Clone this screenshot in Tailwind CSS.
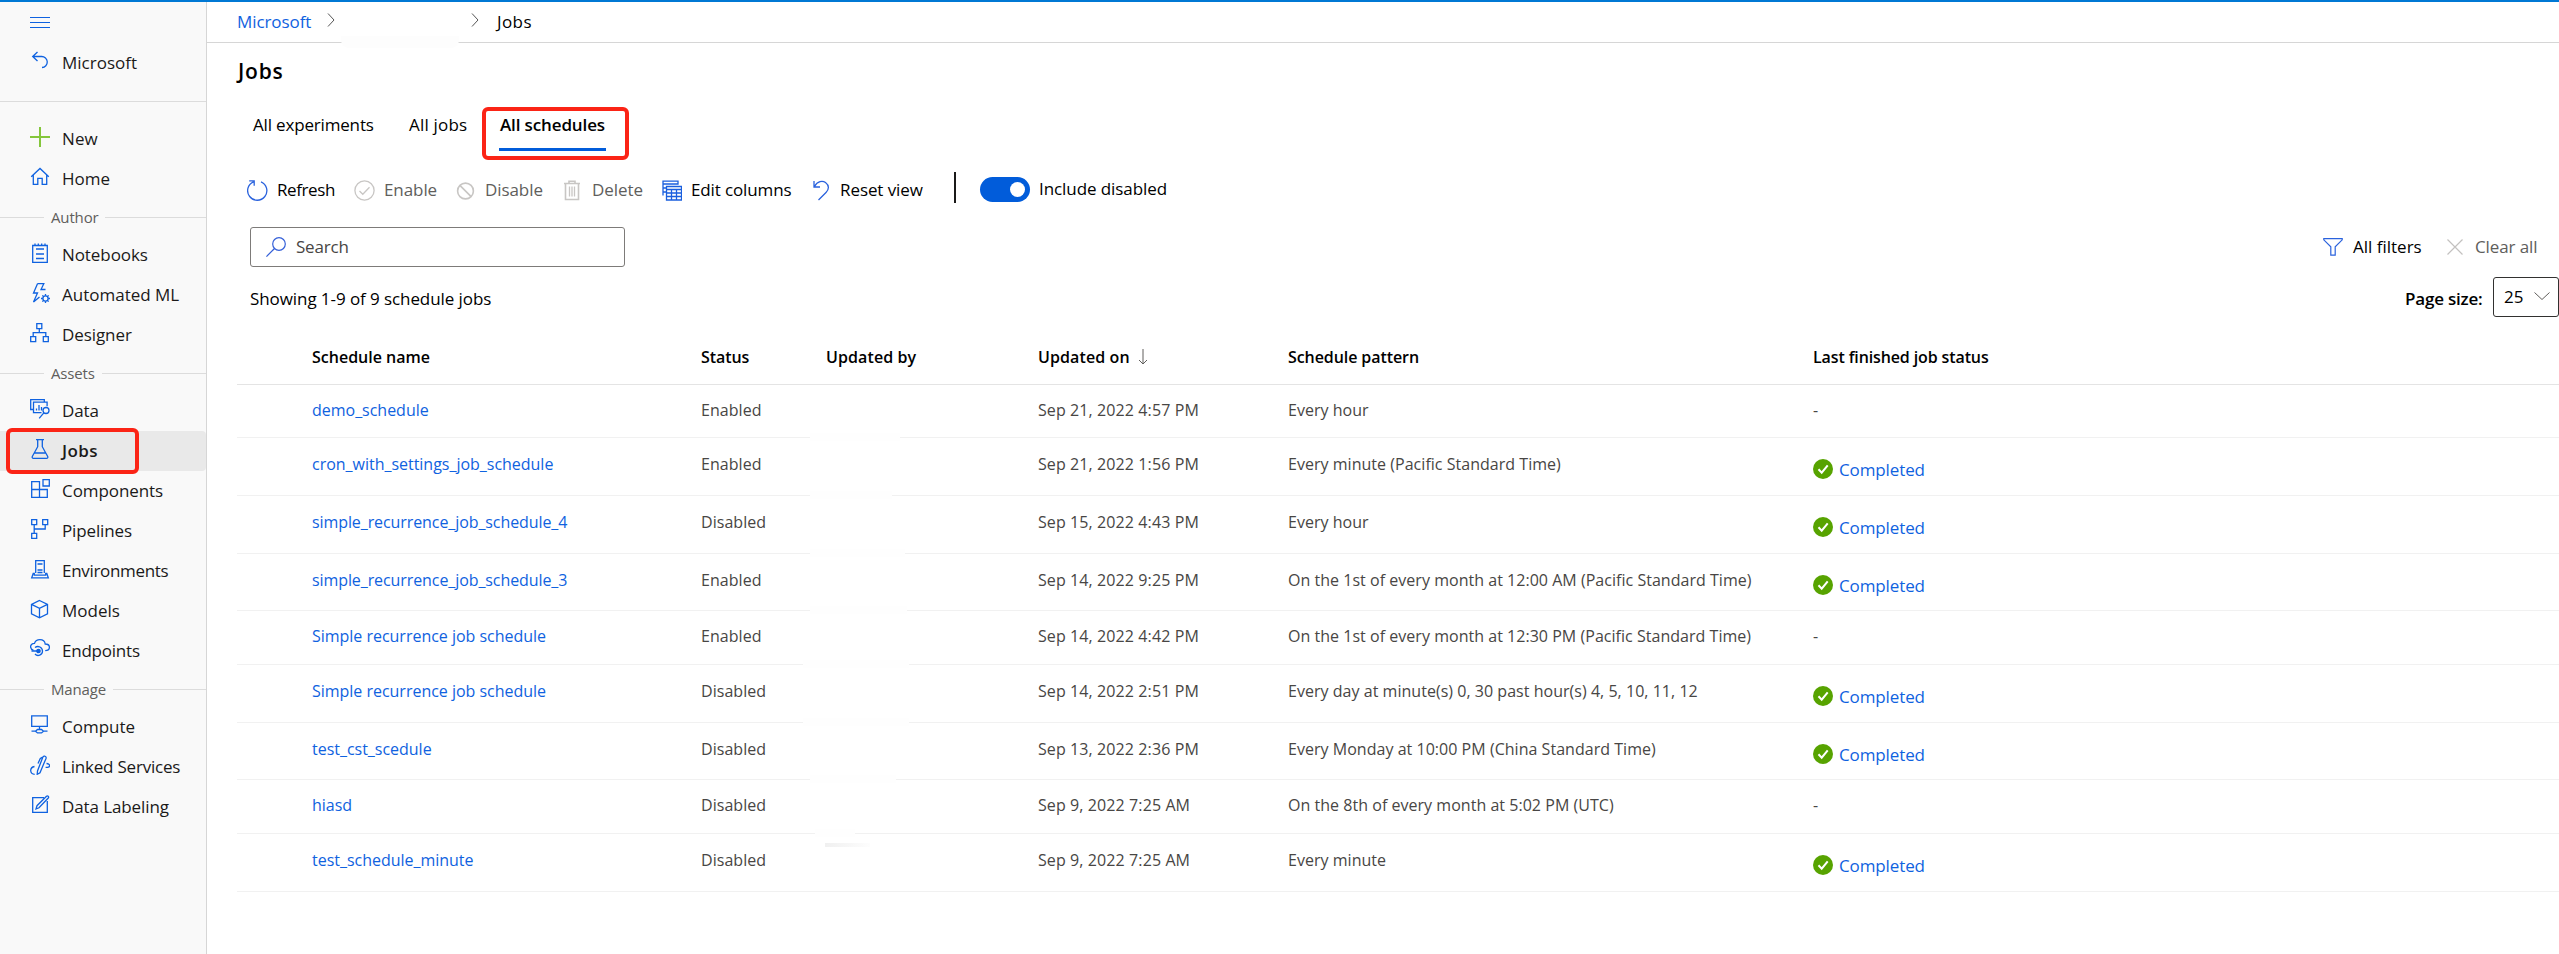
<!DOCTYPE html>
<html lang="en">
<head>
<meta charset="utf-8">
<title>Jobs</title>
<script src="https://cdn.jsdelivr.net/npm/@tailwindcss/browser@4"></script>
</head>
<body class="h-[954px] w-[2559px] overflow-hidden border-t-2 border-[#0078d4] bg-white font-['Open_Sans','Noto_Sans',sans-serif] text-[17px] leading-5 tracking-[-0.08px] text-black">
<div class="flex h-full whitespace-nowrap">

  <nav class="h-full w-[207px] shrink-0 border-r border-[#d6d6d6] bg-[#f9f9f9] text-[#1b1a19]">
    <div class="flex h-[41px] items-center pl-[30px]">
      <svg class="size-5" viewBox="0 0 20 20" fill="none" stroke="#0f62e0"><path d="M0 4.500h20M0 9.500h20M0 14.500h20"/></svg>
    </div>
    <div id="nav"></div>
  </nav>

  <main class="flex h-full min-w-0 flex-1 flex-col">
    <div class="relative flex h-[41px] shrink-0 items-center border-b border-[#d6d6d6] pl-[30px]">
      <span class="w-[90px] text-[#0f62e0]">Microsoft</span>
      <svg class="mt-[-4px] h-3.5 w-2" viewBox="0 0 8 14" fill="none" stroke="#555"><path d="M1 .5 7 7 1 13.500"/></svg>
      <svg class="mt-[-4px] ml-[136px] h-3.5 w-2" viewBox="0 0 8 14" fill="none" stroke="#555"><path d="M1 .5 7 7 1 13.500"/></svg>
      <span class="ml-[18px] tracking-[0.4px]">Jobs</span>
      <div class="absolute top-[34px] left-[134px] h-3 w-[118px] rounded-b-lg bg-[#fdfdfd]"></div>
    </div>

    <h1 class="mt-[14px] ml-[31px] h-7 text-[21px] leading-7 font-semibold tracking-[0.8px]">Jobs</h1>

    <div class="mt-[30px] ml-[46px] flex h-9 leading-[19px]">
      <span class="w-[156px] tracking-[-0.17px]">All experiments</span>
      <span class="w-[90px] tracking-[0.2px]">All jobs</span>
      <div class="relative w-[107px] border-b-3 border-[#015cda] pl-px">
        <span class="font-semibold tracking-[-0.13px]">All schedules</span>
        <div class="absolute -top-[8px] -left-[17px] h-[53px] w-[147px] rounded-md border-4 border-[#fb2416]"></div>
      </div>
    </div>

    <div class="mt-[18px] ml-10 flex h-[42px] items-center" id="toolbar"></div>

    <div class="mt-[16px] flex h-10 items-center">
      <div class="ml-[43px] flex h-10 w-[375px] items-center rounded-[3px] border border-[#7d7b79] pl-[15px]">
        <svg class="size-5" viewBox="0 0 20 20" fill="none" stroke="#3560d8" stroke-width="1.2"><circle cx="13" cy="7" r="6.300"/><path d="M8.500 11.500.4 19.600"/></svg>
        <span class="ml-2.5 tracking-[-0.2px] text-[#484644]">Search</span>
      </div>
      <div class="flex-1"></div>
      <svg class="size-5" viewBox="0 0 20 20" fill="none" stroke="#2a62dd" stroke-width="1.2"><path d="M.8 1.600h18.400v1.200l-7 7v8.400H7.800V9.800l-7-7z"/></svg>
      <span class="ml-2.5 w-[94px] tracking-normal">All filters</span>
      <svg class="size-4" viewBox="0 0 16 16" fill="none" stroke="#c3c1bf" stroke-width="1.200"><path d="m.5.5 15 15m0-15-15 15"/></svg>
      <span class="ml-3 w-[84px] tracking-[-0.1px] text-[#605e5c]">Clear all</span>
    </div>

    <div class="mt-2.5 flex h-10 items-center">
      <span class="mt-1 ml-[43px]">Showing 1-9 of 9 schedule jobs</span>
      <div class="flex-1"></div>
      <span class="mt-1 w-[88px] font-semibold tracking-[-0.2px]">Page size:</span>
      <div class="flex h-10 w-[66px] items-center rounded-[3px] border border-[#323130] pl-2.5">
        <span class="w-[30px]">25</span>
        <svg class="mt-[-2px] h-2 w-4" viewBox="0 0 16 8" fill="none" stroke="#605e5c"><path d="m.5.5 7.500 7 7.500-7"/></svg>
      </div>
    </div>

    <div class="ml-[30px]" id="grid"></div>
  </main>
</div>

<script>
const B = '<svg class="size-5 shrink-0" viewBox="0 0 20 20" fill="none" stroke="#0f62e0" stroke-width="1.300">';
const icons = {
  back: B + '<path d="M7.500 1 2.700 5.500 7.500 10M3 5.500h8.500a5.500 5.500 0 0 1 .5 11"/></svg>',
  plus: '<svg class="size-5 shrink-0" viewBox="0 0 20 20" fill="none" stroke="#84c63c" stroke-width="2"><path d="M10 0v20M0 10h20"/></svg>',
  home: B + '<path d="M1.200 9.800 10 1.500l8.800 8.300M3.300 8v9.400h4.500v-6h4.400v6h4.500V8"/></svg>',
  notebook: B + '<path d="M2.700 2.500h14.600v16.800H2.700zM5 .5v2M8.300.5v2M11.700.5v2M15 .5v2M6 6h8M6 11h8M6 15.500h8"/></svg>',
  automl: B + '<path d="M7.500.7h6.300L11 6.500h4.500M7.500.7 3.500 10h4l-4 9L9.500 14"/><circle cx="15.500" cy="15.500" r="2.600"/><path d="M15.500 11v1.800M15.500 18.200V20M11 15.500h1.800M18.200 15.500H20M12.400 12.400l1.200 1.200M17.400 17.400l1.200 1.200M18.600 12.400l-1.200 1.200M13.600 17.400l-1.200 1.200"/></svg>',
  designer: B + '<path d="M6.800.7h5v5h-5zM.7 13.700h5v5h-5zM13.300 13.700h5v5h-5zM9.300 5.700v4M3.200 13.700v-4h12.600v4"/></svg>',
  data: B + '<path d="M3.500 10.500H.7V.7h13.600v2.500M11.500 13.700h-8V3.200h13.600v4M6.500 11.500V9.500M9 11.500V6M11.500 11.500V8"/><circle cx="16" cy="11.500" r="3"/><path d="m13.800 13.800-4.600 5.500"/></svg>',
  jobs: B + '<path d="M6 .7h8M7.700.7v7L2.300 17.500c-.4 1 .1 1.800 1.100 1.800h13.200c1 0 1.500-.8 1.100-1.800L12.300 7.700v-7M4.500 14h11"/></svg>',
  components: B + '<path d="M1.700 2.700h7.800v15.600H1.700zM1.700 10.500h15.600v7.800H9.500M13 .7h6.300V7H13z"/></svg>',
  pipelines: B + '<path d="M1.700.7h5v5h-5zM12.700.7h5v5h-5zM1.700 14.300h5v5h-5zM4.200 5.700v8.600M4.200 10h11V5.700"/></svg>',
  environments: B + '<path d="M5.700 14V1.700h8.600V14M7.500 5h5M7.500 11h5M7.500 13.500h5M4.300 14.500H3.200L1.700 18.800h16.600l-1.500-4.300h-1.100v1.600H4.300z"/></svg>',
  models: B + '<path d="m9.500 1.500 8 3.800v9.500l-8 4-8-4V5.300zM1.500 5.300l8 4 8-4M9.500 9.300v9.500"/></svg>',
  endpoints: B + '<path d="M3.500 11.300C1.500 10.600.6 9.300.6 7.800c0-2.200 1.800-3.500 3.900-3.400C5.300 2 7.500.7 9.900.7c3 0 5 2 5.300 4.300 2.500 0 4.200 1.400 4.200 3.300 0 1.900-1.300 3.300-4.200 3.400"/><circle cx="8.500" cy="12" r="1.700" fill="#0f62e0"/><path d="M5 8.600a4.600 4.600 0 0 1 7.500 3.600A4.300 4.300 0 0 1 5 15M1.500 12h6"/></svg>',
  compute: B + '<path d="M1.700.9h15.600v10.400H1.700zM9.500 11.300v3M1.500 16.200h4M13.500 16.200h4M7.500 14.500h4l2 1.700-2 1.700h-4l-2-1.700z"/></svg>',
  linked: B + '<path d="M12.800 2.200c1-2 4-.9 3.200 1.200L10 17.800l-2.800 1.500.3-3.300zM14.800.8 10.300 3.500 8 8.500M4.500 11.500C2 12 .6 13.700.7 15.800c.2 2.200 1.800 3.500 4 3.500M16.500 8.500c2 0 3.200 1 3.100 2.200-.1 1.400-1.900 1.900-4 1.700"/></svg>',
  labeling: B + '<path d="M14 2.700H2.700v14.600h14.600V6M6 14l1-3.300L16.500 1.200c1.200-1 2.700.7 1.800 1.800L9 12.800z"/></svg>'
};

const nav = [
  ['back', 'Microsoft', 'tracking-normal'], 'rule',
  ['plus', 'New', 'tracking-[0.1px]'], ['home', 'Home', 'tracking-normal'], ['Author'],
  ['notebook', 'Notebooks', ''], ['automl', 'Automated ML', 'tracking-normal'], ['designer', 'Designer', ''], ['Assets'],
  ['data', 'Data', ''], ['jobs', 'Jobs', 'tracking-[0.4px]'], ['components', 'Components', ''], ['pipelines', 'Pipelines', 'tracking-[-0.14px]'],
  ['environments', 'Environments', 'tracking-[-0.32px]'], ['models', 'Models', 'tracking-normal'], ['endpoints', 'Endpoints', 'tracking-[-0.22px]'], ['Manage'],
  ['compute', 'Compute', 'tracking-normal'], ['linked', 'Linked Services', 'tracking-[-0.2px]'], ['labeling', 'Data Labeling', 'tracking-[-0.1px]']
];
document.getElementById('nav').innerHTML = nav.map(n => {
  if (n === 'rule') return '<div class="mb-[17px] h-[19px] border-b border-[#dcdcdc]"></div>';
  if (n.length === 1) return `<div class="flex h-9 items-center"><i class="h-px w-11 bg-[#dcdcdc]"></i><span class="mx-[7px] text-[15px] tracking-[-0.15px] text-[#605e5c]">${n[0]}</span><i class="h-px flex-1 bg-[#dcdcdc]"></i></div>`;
  const on = n[1] === 'Jobs';
  return `<div class="${on ? 'relative flex h-10 items-center rounded-r bg-[#e9e9e9] pl-[30px] font-semibold' : 'flex h-10 items-center pl-[30px]'}">
    <div class="-mt-1">${icons[n[0]]}</div><span class="ml-3 ${n[2]}">${n[1]}</span>
    ${on ? '<div class="absolute -top-[3px] left-[6px] h-[46px] w-[133px] rounded-md border-4 border-[#fb2416]"></div>' : ''}</div>`;
}).join('');

const T = (stroke, body) => `<svg class="size-[21px] shrink-0" viewBox="0 0 21 21" fill="none" stroke="${stroke}" stroke-width="1.300">${body}</svg>`;
const tools = [
  ['w-[107px]', T('#2a62dd', '<path d="M14 1.800A9.600 9.600 0 1 1 6.500 1.800M2.200.8h5v5"/>'), 'text-black tracking-[-0.4px]', 'Refresh'],
  ['w-[101px]', T('#c8c6c4', '<circle cx="10.500" cy="10.500" r="9.600"/><path d="m5.500 11 3.300 3.300 6.700-7"/>'), 'text-[#605e5c]', 'Enable'],
  ['w-[107px]', T('#c8c6c4', '<circle cx="10.500" cy="11" r="7.900" stroke-width="1.600"/><path d="m4.900 5.400 11.200 11.200" stroke-width="1.600"/>'), 'text-[#605e5c]', 'Disable'],
  ['w-[99px]', T('#c8c6c4', '<path d="M2 3.500h16M7 3.500V1.200h6v2.300M3.500 3.500v16h13v-16" stroke-width="1.600"/><path d="M7.500 6.500v10M10 6.500v10M12.500 6.500v10"/>'), 'text-[#605e5c]', 'Delete'],
  ['w-[149px]', T('#1a5fde', '<path d="M2 15.500V1.200h15V4H2M2 8h3M2 12h3M5.500 6.500h15v13.500h-15zM5.500 9.500h15M5.500 13h15M5.500 16.500h15M10.500 9.500V20M15.500 9.500V20"/>'), 'text-black tracking-[-0.13px]', 'Edit columns'],
  ['w-[144px]', T('#2a62dd', '<path d="M4 1v6h6M4.500 6.500C7.500 1 12.500.3 15.500 2.500c4 3 3.500 7 .5 10l-7.500 7.500"/>'), 'text-black', 'Reset view']
];
document.getElementById('toolbar').innerHTML = tools.map(t =>
  `<div class="flex items-center ${t[0]}">${t[1]}<span class="ml-[9px] ${t[2]}">${t[3]}</span></div>`).join('') +
  `<div class="mt-[-5px] h-[31px] w-0.5 bg-[#1b1a19]"></div>
   <div class="mt-[-1px] ml-6 flex h-[25px] w-[50px] items-center justify-end rounded-full bg-[#015cda] pr-[5px]"><i class="size-[15px] rounded-full bg-white"></i></div>
   <span class="mt-[-2px] ml-[9px]">Include disabled</span>`;

/* height, name, status, updated on, pattern, completed, gap in the bottom rule */
const rows = [
  ['h-[53px]', 'demo_schedule', 'Enabled', 'Sep 21, 2022 4:57 PM', 'Every hour', 0, [810, 900]],
  ['h-[58px]', 'cron_with_settings_job_schedule', 'Enabled', 'Sep 21, 2022 1:56 PM', 'Every minute (Pacific Standard Time)', 1, [810, 892]],
  ['h-[58px]', 'simple_recurrence_job_schedule_4', 'Disabled', 'Sep 15, 2022 4:43 PM', 'Every hour', 1, [810, 905]],
  ['h-[57px]', 'simple_recurrence_job_schedule_3', 'Enabled', 'Sep 14, 2022 9:25 PM', 'On the 1st of every month at 12:00 AM (Pacific Standard Time)', 1, [810, 907]],
  ['h-[54px]', 'Simple recurrence job schedule', 'Enabled', 'Sep 14, 2022 4:42 PM', 'On the 1st of every month at 12:30 PM (Pacific Standard Time)', 0, [803, 909]],
  ['h-[58px]', 'Simple recurrence job schedule', 'Disabled', 'Sep 14, 2022 2:51 PM', 'Every day at minute(s) 0, 30 past hour(s) 4, 5, 10, 11, 12', 1, [803, 909]],
  ['h-[57px]', 'test_cst_scedule', 'Disabled', 'Sep 13, 2022 2:36 PM', 'Every Monday at 10:00 PM (China Standard Time)', 1, [810, 896]],
  ['h-[54px]', 'hiasd', 'Disabled', 'Sep 9, 2022 7:25 AM', 'On the 8th of every month at 5:02 PM (UTC)', 0, [815, 855]],
  ['h-[58px]', 'test_schedule_minute', 'Disabled', 'Sep 9, 2022 7:25 AM', 'Every minute', 1, null]
];
const cols = 'grid grid-cols-[75px_389px_125px_212px_250px_525px_1fr]';
document.getElementById('grid').innerHTML =
  `<div class="${cols} h-[68px] items-center border-b border-[#e4e4e4] pt-3 text-[16px] font-semibold">
    <i></i><span class="tracking-normal">Schedule name</span><span>Status</span><span class="tracking-[0.1px]">Updated by</span>
    <span class="flex items-center tracking-[0.1px]">Updated on<svg class="ml-2 h-4 w-2.5" viewBox="0 0 10 16" fill="none" stroke="#605e5c"><path d="M5 0v15M1 11l4 4 4-4"/></svg></span>
    <span>Schedule pattern</span><span class="tracking-[-0.12px]">Last finished job status</span></div>` +
  rows.map(r => `<div class="${cols} relative ${r[0]} ${r[5] ? 'pt-4' : 'pt-[15px]'} items-start border-b border-[#f1f1f1] text-[16px] tracking-normal text-[#484644]">
    <i></i><a class="${r[1].startsWith('simple') ? 'tracking-[-0.09px] text-[#0f62e0]' : 'tracking-[-0.02px] text-[#0f62e0]'}">${r[1]}</a><span class="tracking-[0.05px]">${r[2]}</span><i></i>
    <span class="tracking-[0.1px]">${r[3]}</span><span class="tracking-[0.03px]">${r[4]}</span>
    ${r[5] ? `<span class="flex items-center pt-[3px]"><svg class="size-5" viewBox="0 0 20 20"><circle cx="10" cy="10" r="10" fill="#57a300"/><path d="m5.500 10.300 3.200 3.400 6-7.400" fill="none" stroke="#fff" stroke-width="2"/></svg><span class="mt-[3px] ml-1.5 text-[17px] tracking-[-0.12px] text-[#0f62e0]">Completed</span></span>` : '<span>-</span>'}
    ${r[6] ? `<div class="absolute -bottom-1 h-2 bg-[#fefefe]" style="left:${r[6][0] - 237}px;width:${r[6][1] - r[6][0]}px"></div>` : '<div class="absolute top-[9px] left-[588px] h-1 w-[45px] bg-gradient-to-r from-[#f0f0f0] to-[#fdfdfd]"></div>'}
  </div>`).join('');
</script>
</body>
</html>
